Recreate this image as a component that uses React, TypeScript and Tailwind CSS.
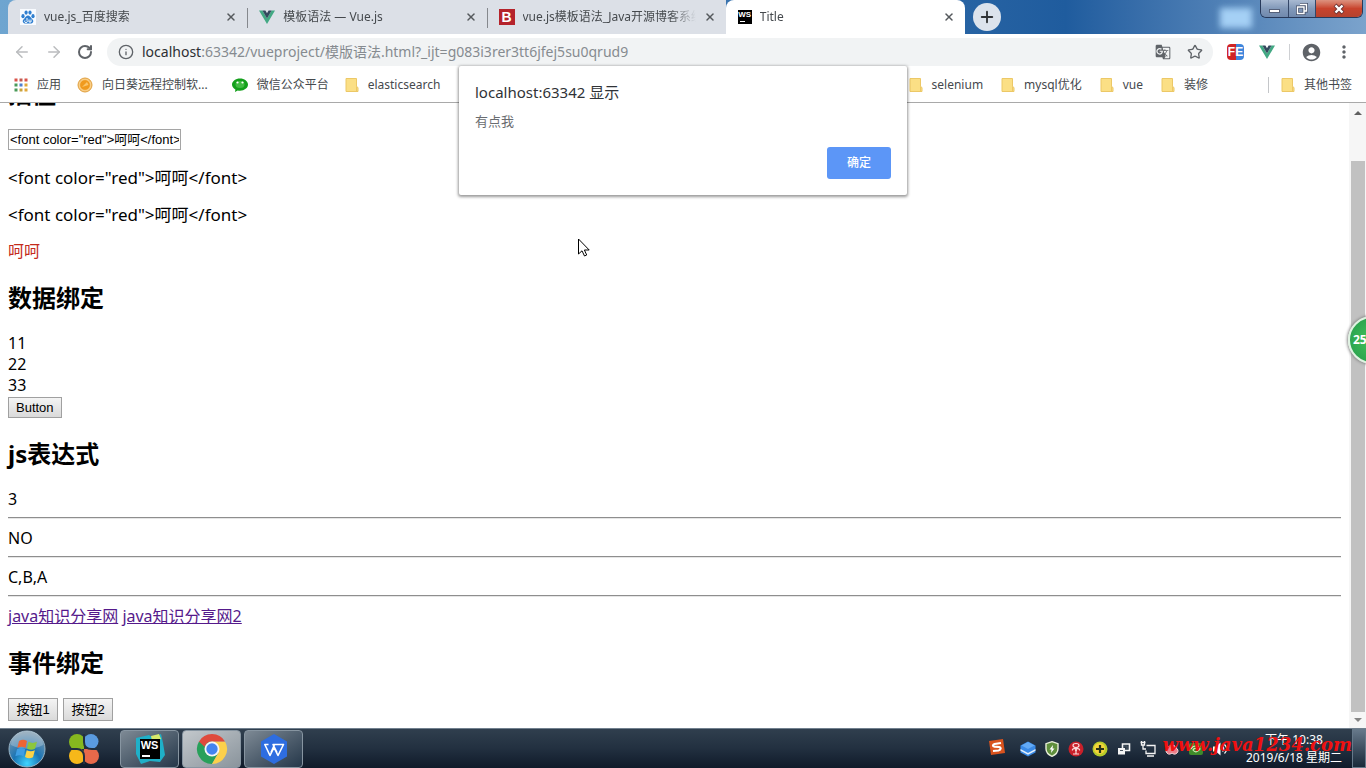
import type { ReactNode } from "react";
import { ArrowLeft, ArrowRight, Info, Plus, RotateCw, Star, X } from "lucide-react";
import { MdAccountCircle, MdGTranslate, MdMoreVert } from "react-icons/md";

const BaiduIcon = () => (
  <svg viewBox="0 0 16 16" className="h-4 w-4 shrink-0">
    <rect width="16" height="16" fill="#f8fbff" />
    <g fill="#2f7fd0">
      <ellipse cx="3" cy="7.2" rx="1.6" ry="2.1" />
      <ellipse cx="6.1" cy="3.6" rx="1.6" ry="2.1" />
      <ellipse cx="10" cy="3.6" rx="1.6" ry="2.1" />
      <ellipse cx="13" cy="7.2" rx="1.6" ry="2.1" />
      <path d="M8 6.6c1.7 0 2.3 1.6 3.6 2.8 1.5 1.3 2 2.3 1.5 3.700-.7 1.900-2.800 1.500-5.100 1.400-2.300.1-4.400.5-5.100-1.400-.5-1.400 0-2.400 1.500-3.700C5.700 8.200 6.300 6.600 8 6.600z" />
    </g>
    <path d="M5 11.5a1.3 1.3 0 1 0 2 0V9M9 10.5v2.5h2v-2.5" fill="none" stroke="#fff" strokeWidth="1" />
  </svg>
);

const VueIcon = () => (
  <svg viewBox="0 0 16 16" className="h-4 w-4 shrink-0">
    <path d="M0 1.5h3.4L8 9.5l4.6-8H16L8 15z" fill="#42a883" />
    <path d="M3.4 1.5h3L8 4.3l1.6-2.8h3L8 9.5z" fill="#34495e" />
  </svg>
);

const BlogIcon = () => (
  <span className="flex h-4 w-4 shrink-0 items-center justify-center bg-[#b5232b] font-['Liberation_Sans'] text-sm font-bold text-white">
    B
  </span>
);

const WsIcon = () => (
  <span className="relative flex h-[14px] w-[14px] shrink-0 justify-center bg-black font-['Liberation_Sans'] text-[8px] leading-[9px] font-bold text-white">
    WS
    <span className="absolute bottom-[2px] left-[2px] h-px w-[5px] bg-white" />
  </span>
);

const FolderIcon = () => (
  <svg viewBox="0 0 14 16" className="h-4 w-[14px] shrink-0">
    <path d="M1 1.5h10.5v8l1.5 1v4H1z" fill="#fbdf85" stroke="#ecc867" />
    <path d="M11.5 9.5v5" stroke="#ecc867" />
  </svg>
);

const AppsIcon = () => {
  const colors = ["#d9534a", "#c25a50", "#d9534a", "#4a9a5a", "#4f7fd0", "#e0a83a", "#4a9a5a", "#c9a23c", "#e0a83a"];
  return (
    <svg viewBox="0 0 14 14" className="h-[14px] w-[14px] shrink-0">
      {colors.map((color, i) => (
        <rect key={i} x={(i % 3) * 5 + 0.5} y={Math.floor(i / 3) * 5 + 0.5} width="3" height="3" fill={color} />
      ))}
    </svg>
  );
};

const SunflowerIcon = () => (
  <svg viewBox="0 0 16 16" className="h-4 w-4 shrink-0">
    <circle cx="8" cy="8" r="7" fill="#f7c87c" stroke="#e0a040" />
    <circle cx="8" cy="8" r="5.4" fill="#f09a1e" stroke="#fde2ae" strokeWidth=".6" />
    <path d="M5 10l5-5 1.5 3z" fill="#fbc56a" />
  </svg>
);

const WechatIcon = () => (
  <svg viewBox="0 0 16 16" className="h-4 w-4 shrink-0">
    <path d="M8 1.5c4.4 0 8 2.7 8 6.1s-3.600 6.100-8 6.100c-.8 0-1.600-.1-2.300-.3L3 15l.4-2.500C1.300 11.400 0 9.600 0 7.600c0-3.400 3.600-6.100 8-6.100z" fill="#14a01c" />
    <ellipse cx="8" cy="7.5" rx="4.5" ry="3.5" fill="#5fcf5c" opacity=".6" />
    <circle cx="5.5" cy="5.5" r="1.1" fill="#fff" />
    <circle cx="10.5" cy="5.5" r="1.1" fill="#fff" />
  </svg>
);

const FeIcon = () => (
  <span className="flex h-4 w-[17px] items-center justify-center rounded-sm bg-linear-to-r from-[#d02424] from-50% to-[#3e86dc] to-50% font-['Liberation_Sans'] text-xs font-bold text-white">
    FE
  </span>
);

const StartIcon = () => (
  <svg viewBox="0 0 40 40" className="h-10 w-10">
    <defs>
      <radialGradient id="orb" cx="50%" cy="90%" r="85%">
        <stop offset="0" stopColor="#3fd5ff" />
        <stop offset=".45" stopColor="#1a74b4" />
        <stop offset="1" stopColor="#7b98ae" />
      </radialGradient>
    </defs>
    <circle cx="20" cy="20" r="18" fill="url(#orb)" stroke="#99b4c5" />
    <path d="M4 16a16 14 0 0 1 32 0c-9 5-22 5-32 0z" fill="#fff" opacity=".25" />
    <path d="M12 12c3-1.8 5.5-1.5 8 0l-1.5 7c-2.5-1.6-5-1.7-8.2 0z" fill="#ee6534" />
    <path d="M21.5 12.8c3 1.5 5.5 1.5 8.5 0l-2 7c-2.8 1.4-5.2 1.3-8-.2z" fill="#8cc63e" />
    <path d="M10 20.3c3-1.7 5.5-1.5 8.2 0l-1.7 7c-2.6-1.5-5-1.5-8.2 0z" fill="#3f9ee3" />
    <path d="M19.7 21.2c3 1.4 5.4 1.4 8.2.1l-1.9 7c-2.9 1.3-5.2 1.2-8-.3z" fill="#fcd246" />
  </svg>
);

const PinwheelIcon = () => (
  <svg viewBox="0 0 32 32" className="h-8 w-8">
    <circle cx="23" cy="8.500" r="7.500" fill="#5a9be0" />
    <circle cx="23" cy="23" r="8" fill="#e8694a" />
    <circle cx="9" cy="23" r="8" fill="#f6b81a" />
    <circle cx="9" cy="9" r="8" fill="#86b81f" />
    <path d="M9 9h7v7H9z" fill="#86b81f" />
    <path d="M16 16h7v7h-7z" fill="#e8694a" />
    <path d="M16 1v8c0 5 3 7 8 7h7M1 16h8c4 0 7 3 7 7v8" fill="none" stroke="#22303f" strokeWidth="2" />
  </svg>
);

const WebStormIcon = () => (
  <span className="relative flex h-8 w-8 items-center justify-center">
    <svg viewBox="0 0 32 32" className="absolute inset-0 h-8 w-8">
      <path d="M2 5l13-3 4 3 8-4 2 9 2 12-5 7-10-1-9 3-5-10z" fill="#1fb0c8" />
      <path d="M17 3l8-2 2 5-9 2z" fill="#d8e86a" />
    </svg>
    <span className="relative h-5 w-5 bg-black text-center font-['Liberation_Sans'] text-[11px] leading-3 font-bold text-white">
      WS
      <span className="absolute bottom-[2px] left-[2px] h-[2px] w-2 bg-white" />
    </span>
  </span>
);

const ChromeIcon = () => (
  <svg viewBox="0 0 32 32" className="h-8 w-8">
    <path d="M3 8.5A15 15 0 0 0 16 31l6.500-11.500L16 16z" fill="#28a05a" />
    <path d="M29 8.5A15 15 0 0 1 16 31l6.500-11.300L16 8.500z" fill="#fcd04b" />
    <path d="M3 8.5L9.500 20 16 8.500z" fill="#28a05a" />
    <path d="M3 8.5a15 15 0 0 1 26 0H16a7.500 7.500 0 0 0-7.200 5.500z" fill="#df4a3c" />
    <circle cx="16" cy="16" r="7.5" fill="#f5f5f5" />
    <circle cx="16" cy="16" r="5.7" fill="#4384ef" />
  </svg>
);

const WpsIcon = () => (
  <svg viewBox="0 0 32 32" className="h-8 w-8">
    <path d="M16 1l13 7.5v15L16 31 3 23.5v-15z" fill="#2e6de0" />
    <path d="M10.500 11.500H6.800L12 22.500l4-8 4 8 5.500-11H15l4 8M13 19.500l3.500-8" fill="none" stroke="#fff" strokeWidth="1.600" strokeLinejoin="round" />
  </svg>
);

const trayIcons: ReactNode[] = [
  <g>
    <path d="M8 .5l7.5 4v7L8 15.500.500 11.500v-7z" fill="#3a8ae6" />
    <path d="M8 1l6.500 3.500L8 8 1.500 4.500z" fill="#63aaf5" />
    <path d="M.500 8L8 12l7.500-4v1.800L8 13.800.500 9.800z" fill="#e4f0fd" />
  </g>,
  <g>
    <path d="M8 .7l6 2v5c0 4-3 6.3-6 7.600-3-1.300-6-3.600-6-7.600v-5z" fill="#5f8f3c" stroke="#e9efd9" strokeWidth="1.4" />
    <path d="M9 4L5.5 8.500h2L7 12l3.500-4.500h-2z" fill="#fff" />
  </g>,
  <g>
    <circle cx="8" cy="8" r="7.5" fill="#c8202a" />
    <path d="M5 4.500a3 2 0 1 1 6 0c0 1.500-1.500 2-3 2s-3-.5-3-2zM5.500 7.500h5M4.500 9.500a2 1.500 0 1 1 3.500.5 2 1.500 0 1 1 3.500-.5M5 13h6M8 10v3" fill="none" stroke="#fbdcdc" strokeWidth="1.2" />
  </g>,
  <g>
    <circle cx="8" cy="8" r="7.5" fill="#b6cc2a" />
    <circle cx="7.5" cy="7.5" r="5.5" fill="#f3d33a" />
    <path d="M8 4v8M4 8h8" stroke="#27331a" strokeWidth="2.2" />
  </g>,
  <g>
    <path d="M6.500 3h7v6.500h-7z" fill="#2a3846" stroke="#f4f4f4" strokeWidth="1.600" />
    <path d="M2 7h7v6.500H2z" fill="#f4f4f4" />
    <path d="M4 9.500h3M8 5h3v3" fill="none" stroke="#4b5662" />
  </g>,
  <path d="M6.5 4.5h8.500v8h-9v-3M7 15h7M.500 1.500h5M1.500 0v4h3V0M3 4v4h3" fill="none" stroke="#f4f4f4" strokeWidth="1.3" />,
  <path d="M8 5a2.5 2.5 0 0 1 4 2 3 3 0 0 1 1 5c-2 2-4 1-5 0-1 1-3.5 2-5 0a3 3 0 0 1 1-5 2.5 2.5 0 0 1 4-2z" fill="#eb7f8a" stroke="#f8d8dc" />,
  <g>
    <rect x="1" y="2" width="14" height="12" rx="2" fill="#3f8a2a" />
    <path d="M3 8c2-4 7-4 9 0-2 3-5 4-7 1 1-2 3-2 4-1" fill="none" stroke="#d2edb8" strokeWidth="1.2" />
  </g>,
  <g>
    <path d="M1 5.5h3L8.5 1.500v13L4 10.500H1z" fill="#fff" />
    <path d="M10.5 5.5c1.5 1.5 1.5 3.5 0 5M12.5 3.500c3 3 3 6 0 9" fill="none" stroke="#fff" strokeWidth="1.2" />
  </g>,
];

const tabs = [
  { title: "vue.js_百度搜索", icon: <BaiduIcon /> },
  { title: "模板语法 — Vue.js", icon: <VueIcon /> },
  { title: "vue.js模板语法_Java开源博客系统", icon: <BlogIcon /> },
  { title: "Title", icon: <WsIcon />, active: true },
];

const Bookmark = ({ icon, children }: { icon: ReactNode; children: ReactNode }) => (
  <a href="#" className="flex items-center gap-[9px] whitespace-nowrap">
    {icon}
    {children}
  </a>
);

const TabStrip = () => (
  <div className="flex h-[34px] shrink-0 bg-linear-to-r from-[#6ea5d0] via-[#1f5c9e] via-78% to-[#7ba3cc] pl-2">
    <div className="flex w-[957px] min-w-0 text-xs text-[#45494d]" role="tablist">
      {tabs.map((tab, i) => (
        <div
          key={tab.title}
          role="tab"
          aria-selected={!!tab.active}
          className={`relative flex min-w-0 flex-1 items-center gap-2 pr-[10px] pl-3 ${
            tab.active ? "rounded-t-lg bg-white" : "bg-[#dce0e7]"
          } ${i === 0 ? "rounded-tl-lg" : ""}`}
        >
          {(i === 1 || i === 2) && <span className="absolute top-2 left-0 h-5 w-px bg-[#85888d]" />}
          {tab.icon}
          <span className="flex-1 overflow-hidden whitespace-nowrap [mask-image:linear-gradient(to_right,#000_85%,transparent)]">
            {tab.title}
          </span>
          <button aria-label="关闭" className="text-[#55595d]">
            <X className="h-3 w-3" strokeWidth={3} />
          </button>
        </div>
      ))}
    </div>
    <button aria-label="新标签页" className="mt-[3px] ml-2 flex h-7 w-7 items-center justify-center rounded-full bg-[#dce3ec] text-[#303336]">
      <Plus className="h-[18px] w-[18px]" strokeWidth={2.5} />
    </button>
    <div className="mt-2 mr-2 ml-auto h-5 w-8 bg-[#a5d0f5] blur-[3px]" />
    <div className="mr-[3px] flex h-[18px] overflow-hidden rounded-b-md border border-t-0 border-[#27395a]">
      <button aria-label="最小化" className="flex w-7 items-end justify-center border-r border-[#344768] bg-linear-to-b from-[#a9bad2] via-[#8299b9] to-[#7089ad] pb-1">
        <span className="h-1 w-[11px] border border-[#55617a] bg-white" />
      </button>
      <button aria-label="还原" className="flex w-[27px] items-center justify-center border-r border-[#344768] bg-linear-to-b from-[#a9bad2] via-[#8299b9] to-[#7089ad]">
        <svg viewBox="0 0 12 12" className="h-3 w-3" fill="none">
          <path d="M4 1.5h6.5V8H8M1.5 4H8v6.5H1.5z" stroke="#45516b" strokeWidth="3" />
          <path d="M4 1.5h6.5V8H8M1.5 4H8v6.5H1.5z" stroke="#fff" strokeWidth="1.4" />
        </svg>
      </button>
      <button aria-label="关闭窗口" className="flex w-[46px] items-center justify-center bg-linear-to-b from-[#dc927f] via-[#c8432d] to-[#b5422e]">
        <svg viewBox="0 0 12 12" className="h-3 w-3">
          <path d="M2 2l8 8M10 2l-8 8" stroke="#6b3434" strokeWidth="4" />
          <path d="M2.5 2.5l7 7M9.5 2.5l-7 7" stroke="#fff" strokeWidth="2.4" />
        </svg>
      </button>
    </div>
  </div>
);

const Toolbar = () => (
  <div className="flex h-9 shrink-0 items-center pr-3 pl-[13px] text-[#5f6368]">
    <button aria-label="后退" className="mr-[14px] text-[#babcbe]">
      <ArrowLeft className="h-[18px] w-[18px]" />
    </button>
    <button aria-label="前进" className="mr-[14px] text-[#babcbe]">
      <ArrowRight className="h-[18px] w-[18px]" />
    </button>
    <button aria-label="重新加载" className="mr-[14px]">
      <RotateCw className="h-4 w-4" strokeWidth={3} />
    </button>
    <div className="flex h-7 min-w-0 flex-1 items-center rounded-full bg-[#f1f3f4] pr-[10px] pl-[11px]">
      <Info className="mr-2 h-4 w-4 shrink-0" />
      <div className="flex-1 overflow-hidden text-sm whitespace-nowrap text-[#868b90]">
        <span className="text-[#2c2f33]">localhost</span>
        :63342/vueproject/模版语法.html?_ijt=g083i3rer3tt6jfej5su0qrud9
      </div>
      <button aria-label="翻译" className="mr-4">
        <MdGTranslate className="h-4 w-4" />
      </button>
      <button aria-label="收藏">
        <Star className="h-4 w-4" />
      </button>
    </div>
    <button aria-label="FE" className="ml-[14px]">
      <FeIcon />
    </button>
    <button aria-label="Vue" className="ml-[15px]">
      <VueIcon />
    </button>
    <span className="mr-[11px] ml-[14px] h-4 w-px bg-[#ced0d3]" />
    <button aria-label="用户">
      <MdAccountCircle className="h-[21px] w-[21px]" />
    </button>
    <button aria-label="菜单" className="ml-3">
      <MdMoreVert className="h-5 w-5" />
    </button>
  </div>
);

const BookmarksBar = () => (
  <nav className="flex h-[33px] shrink-0 items-center justify-between border-b border-[#a9a9a9] pr-[14px] pb-[3px] pl-[14px] text-xs text-[#45494d]">
    <div className="flex items-center gap-4">
      <Bookmark icon={<AppsIcon />}>应用</Bookmark>
      <Bookmark icon={<SunflowerIcon />}>向日葵远程控制软...</Bookmark>
      <span className="ml-2">
        <Bookmark icon={<WechatIcon />}>微信公众平台</Bookmark>
      </span>
      <Bookmark icon={<FolderIcon />}>elasticsearch</Bookmark>
    </div>
    <div className="flex items-center gap-[18px]">
      <Bookmark icon={<FolderIcon />}>selenium</Bookmark>
      <Bookmark icon={<FolderIcon />}>mysql优化</Bookmark>
      <Bookmark icon={<FolderIcon />}>vue</Bookmark>
      <Bookmark icon={<FolderIcon />}>装修</Bookmark>
      <div className="ml-[42px] border-l border-[#c4c6c9] pl-3">
        <Bookmark icon={<FolderIcon />}>其他书签</Bookmark>
      </div>
    </div>
  </nav>
);

const Heading = ({ id, children }: { id?: string; children: ReactNode }) => (
  <h2 id={id} className="mt-5 mb-[19px] text-2xl leading-8 font-bold">
    {children}
  </h2>
);

const Rule = () => <hr className="mt-[7px] mb-[9px] border-t border-b border-t-[#8e8e8e] border-b-[#e6e6e6]" />;

const Page = () => {
  const html = '<font color="red">呵呵</font>';
  const buttonClass =
    "border border-[#a0a0a0] bg-linear-to-b from-[#f4f4f4] to-[#dadada] font-['Liberation_Sans','Noto_Sans_CJK_SC',sans-serif] text-[13px]";

  return (
    <main className="min-w-0 flex-1 overflow-hidden px-2 text-base leading-[21px] text-black">
      <div className="-mt-[46px]">
        <div className="h-px" />
        <Heading id="interpolation">插值</Heading>
        <input
          aria-labelledby="interpolation"
          defaultValue={html}
          className="block h-[21px] w-[173px] border border-[#a5a5a5] px-px font-['Liberation_Sans','Noto_Sans_CJK_SC',sans-serif] text-[13px]"
        />
        <p className="mt-[17px] mb-4 text-[17px]">{html}</p>
        <p className="my-4 text-[17px]">{html}</p>
        <p className="my-4 text-[#c42b1c]">呵呵</p>
        <Heading>数据绑定</Heading>
        <div>11</div>
        <div>22</div>
        <div>33</div>
        <button className={`${buttonClass} mt-px block h-[21px] px-[7px] leading-[19px]`}>Button</button>
        <Heading>js表达式</Heading>
        <div>3</div>
        <Rule />
        <div>NO</div>
        <Rule />
        <div>C,B,A</div>
        <Rule />
        <div className="text-[#551a8b]">
          <a href="#" className="underline">java知识分享网</a>{" "}
          <a href="#" className="underline">java知识分享网2</a>
        </div>
        <Heading>事件绑定</Heading>
        <div className="flex gap-[5px]">
          <button className={`${buttonClass} h-[23px] w-[50px]`}>按钮1</button>
          <button className={`${buttonClass} h-[23px] w-[50px]`}>按钮2</button>
        </div>
      </div>
    </main>
  );
};

const Scrollbar = () => (
  <div className="flex w-[17px] shrink-0 flex-col items-center bg-[#f6f6f6]">
    <svg viewBox="0 0 16 16" className="mt-[2px] h-4 w-4">
      <path d="M4 10l4-4 4 4z" fill="#606060" />
    </svg>
    <div className="mt-10 w-[14px] flex-1 bg-[#c1c1c1]" />
    <svg viewBox="0 0 16 16" className="h-4 w-4">
      <path d="M4 6l4 4 4-4z" fill="#858585" />
    </svg>
  </div>
);

const AlertDialog = () => (
  <div
    role="alertdialog"
    aria-labelledby="alert-title"
    className="absolute top-[66px] left-1/2 flex w-[448px] -translate-x-1/2 flex-col rounded-xs bg-white px-4 pt-4 pb-4 shadow-[0_1px_3px_1px_rgba(0,0,0,0.4)]"
  >
    <div id="alert-title" className="text-[15px] leading-5 text-[#303337]">
      localhost:63342 显示
    </div>
    <div className="mt-[9px] text-[13px] leading-5 text-[#6a6d71]">有点我</div>
    <button className="mt-4 h-8 w-16 self-end rounded-[3px] bg-[#5c96f7] text-xs font-medium text-white">确定</button>
  </div>
);

const taskButton =
  "flex h-[38px] w-[59px] items-center justify-center rounded-sm border border-[#8795a1]";

const Taskbar = () => (
  <footer className="relative flex h-10 shrink-0 items-center border-t border-[#71808e] bg-linear-to-b from-[#303f4e] via-[#223040] to-[#101b2a] text-white">
    <button aria-label="开始" className="ml-[7px]">
      <StartIcon />
    </button>
    <button aria-label="软件" className="ml-[21px]">
      <PinwheelIcon />
    </button>
    <div className="ml-5 flex gap-[3px]">
      <button aria-label="WebStorm" className={`${taskButton} bg-linear-to-br from-[#7e8a95] to-[#26384a]`}>
        <WebStormIcon />
      </button>
      <button aria-label="Chrome" className={`${taskButton} bg-linear-to-br from-[#c3c8cc] to-[#8a949c]`}>
        <ChromeIcon />
      </button>
      <button aria-label="WPS" className={`${taskButton} bg-linear-to-br from-[#7e8a95] to-[#26384a]`}>
        <WpsIcon />
      </button>
    </div>
    <div className="ml-auto flex items-center gap-2">
      <svg viewBox="0 0 16 16" className="mr-[7px] mb-1 h-4 w-4">
        <path d="M0 2l14-2 2 14-14 2z" fill="#d9531e" />
        <path d="M12 4L5.5 5c-2 .5-2 2.500 0 2.700l4.500.3c2.500.3 2 3-.5 3.500L4 12" fill="none" stroke="#fff" strokeWidth="2.2" />
      </svg>
      {trayIcons.map((icon, i) => (
        <svg key={i} viewBox="0 0 16 16" className="h-4 w-4">
          {icon}
        </svg>
      ))}
    </div>
    <div className="mr-2 ml-4 w-[100px] text-center text-xs leading-[18px]">
      <div>下午 10:38</div>
      <div>2019/6/18 星期二</div>
    </div>
    <button aria-label="显示桌面" className="h-full w-[14px] border border-[#66798a] bg-linear-to-b from-[#66788a] to-[#1a2a3a]" />
    <div className="absolute top-1 right-[14px] font-['DejaVu_Serif'] text-lg leading-6 font-bold text-[#f01010] italic">
      www.java1234.com
    </div>
  </footer>
);

const App = () => {
  return (
    <div className="relative flex h-screen flex-col overflow-hidden bg-white font-['Noto_Sans','Noto_Sans_CJK_SC',sans-serif]">
      <TabStrip />
      <Toolbar />
      <BookmarksBar />
      <div className="flex min-h-0 flex-1">
        <Page />
        <Scrollbar />
      </div>
      <Taskbar />
      <AlertDialog />
      <div className="absolute top-[316px] -right-[30px] flex h-12 w-12 items-center rounded-full border-2 border-[#dff3e2] bg-radial from-[#43c45c] to-[#23994a] pl-[3px] text-xs font-bold text-white shadow-[0_0_3px_1px_#888]">
        25
      </div>
      <svg viewBox="0 0 12 19" className="absolute top-[238px] left-[578px] h-[19px] w-3">
        <path d="M.5 1v15l3.500-3.200L6.500 18l2.200-1-2.300-5h4.800z" fill="#fff" stroke="#000" />
      </svg>
    </div>
  );
};

export default App;
